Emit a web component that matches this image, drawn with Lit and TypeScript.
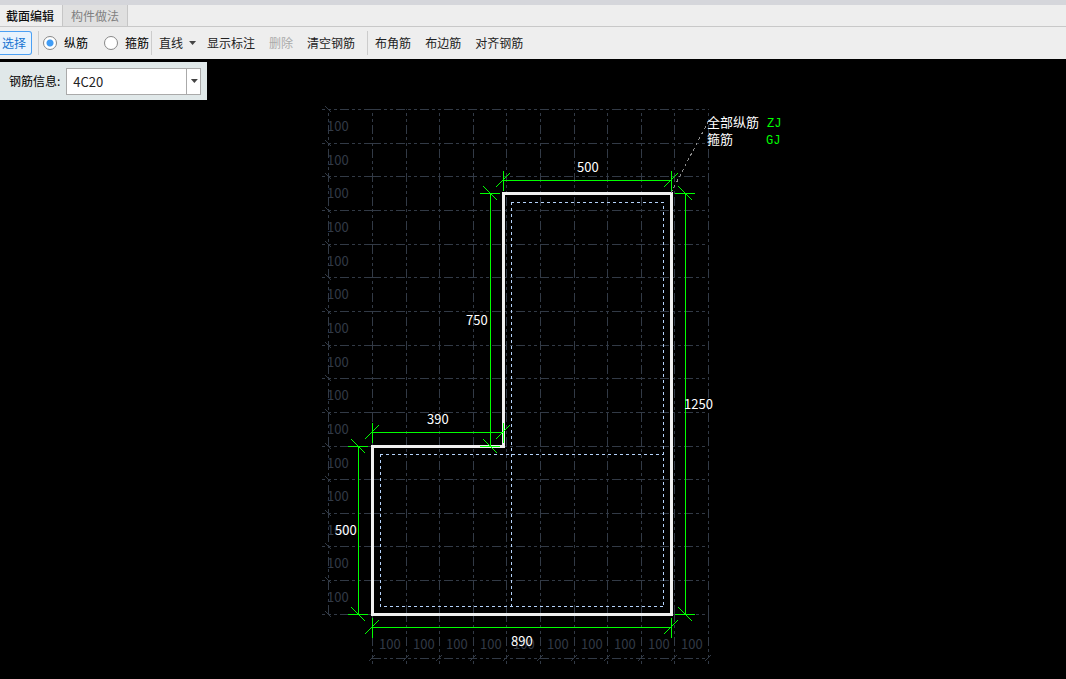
import { LitElement, html, svg, css } from "lit";
import { customElement, state } from "lit/decorators.js";

const COLS = 10;
const ROWS = 15;
const colX = (i: number) => Math.round(i * 33.6);
const rowY = (i: number) => Math.round(i * 33.65);
const W = colX(COLS);
const H = rowY(ROWS);
const range = (n: number) => Array.from({ length: n }, (_, i) => i);

type Dim = { dir: "h" | "v"; pos: number; from: number; to: number; label: string; tx: number; ty: number };

/* Coordinates are relative to the top left corner of the grid. */
const DIMS: Dim[] = [
  { dir: "h", pos: 71, from: 131, to: 299, label: "500", tx: 205, ty: 63 },
  { dir: "v", pos: 118, from: 84, to: 337, label: "750", tx: 94, ty: 216 },
  { dir: "v", pos: 313, from: 84, to: 505, label: "1250", tx: 312, ty: 300 },
  { dir: "h", pos: 323, from: 0, to: 131, label: "390", tx: 55, ty: 315 },
  { dir: "v", pos: -14, from: 337, to: 505, label: "500", tx: -37, ty: 426 },
  { dir: "h", pos: 518, from: 0, to: 299, label: "890", tx: 139, ty: 537 },
];

@customElement("section-canvas")
export class SectionCanvas extends LitElement {
  static styles = css`
    :host { display: flex; min-height: 0; background: #000; }
    .canvas { flex: 1; display: block; width: 100%; height: 100%; min-height: 570px; }
    .lines { shape-rendering: crispEdges; fill: none; stroke-width: 1; }
    .grid { stroke: #323a46; stroke-dasharray: 9 3 3 3 3 3; }
    .lead { stroke-dashoffset: 6; }
    .tick { stroke: #323a46; }
    .outline { stroke: #f0f0f0; stroke-width: 3; }
    .cover { stroke: #b4d2fa; stroke-dasharray: 3 3; }
    .dim { stroke: #00ff00; }
    .leader { stroke: #8c8c8c; stroke-dasharray: 3 3; }
    text { font: 13px "Noto Sans CJK SC", sans-serif; fill: #fff; }
    .scale { fill: #323a46; }
    .code { font: 12px "Liberation Mono", monospace; fill: #00ff00; }
  `;

  private dim(d: Dim) {
    return [d.from, d.to].map((p) =>
      d.dir === "h"
        ? svg`<path d="M${p} ${d.pos - 9}V${d.pos + 11}M${p - 7} ${d.pos + 7}L${p + 7} ${d.pos - 7}" />`
        : svg`<path d="M${d.pos - 10} ${p}H${d.pos + 10}M${d.pos - 7} ${p - 7}L${d.pos + 7} ${p + 7}" />`
    );
  }

  render() {
    return html`<svg class="canvas" role="img" aria-label="截面编辑">
      <g transform="translate(372 9)">
        <g class="lines">
          ${range(ROWS + 1).map((i) => svg`
            <path class="grid lead" d="M-50 ${rowY(i)}H0" />
            <path class="grid" d="M0 ${rowY(i)}H${W}" />
            <path class="tick" d="M-47 ${rowY(i) - 3}l6 6" />`)}
          ${range(COLS + 1).map((i) => svg`
            <path class="grid lead" d="M${colX(i)} ${H + 50}V${H}" />
            <path class="grid" d="M${colX(i)} ${H}V0" />
            <path class="tick" d="M${colX(i) - 3} ${H + 47}l6 -6" />`)}
          <path class="grid" d="M-44 ${H}V0" />
          <path class="grid" d="M0 ${H + 44}H${W}" />
        </g>
        ${range(ROWS).map((i) => svg`<text class="scale" x="-45" y=${rowY(i) + 22}>100</text>`)}
        ${range(COLS).map((i) => svg`<text class="scale" x=${colX(i) + 7} y=${H + 35}>100</text>`)}
        <g class="lines">
          <path class="cover" d="M139 93H291V497M139 93V497M8 345H291M8 345V497H291" />
          <path class="outline" d="M131 84H299V505H0V337H131Z" />
          <path class="leader" d="M299 84L336 13" />
          <g class="dim">
            ${DIMS.map((d) => svg`${this.dim(d)}
              <path d=${d.dir === "h" ? `M${d.from} ${d.pos}H${d.to}` : `M${d.pos} ${d.from}V${d.to}`} />`)}
          </g>
        </g>
        ${DIMS.map((d) => svg`<text x=${d.tx} y=${d.ty}>${d.label}</text>`)}
        <text x="335" y="18">全部纵筋</text>
        <text x="335" y="35">箍筋</text>
        <text class="code" x="395" y="18">ZJ</text>
        <text class="code" x="394" y="35">GJ</text>
      </g>
    </svg>`;
  }
}

@customElement("app-root")
export class AppRoot extends LitElement {
  static styles = css`
    :host {
      display: flex; flex-direction: column; min-height: 100vh; background: #000; color: #222;
      font: 12px/16px "Noto Sans CJK SC", sans-serif;
    }
    button, select { font: inherit; color: inherit; margin: 0; }
    .tabs { display: flex; background: #eee; border-top: 5px solid #d5d6db; border-bottom: 1px solid #c8c8c8; height: 21px; }
    .tab { border: 0; border-right: 1px solid #c6c6c6; padding: 0 8px; background: #e0e0e0; color: #808080; }
    .tab.active { background: #eee; color: #111; font-weight: 500; padding: 0 8px 0 6px; }
    .toolbar { display: flex; align-items: center; height: 32px; background: #eee; white-space: nowrap; }
    .tool { border: 0; background: none; padding: 0 7px; height: 24px; }
    .tool:disabled { color: #aaa; }
    .tool.select {
      background: #e8f3fd; color: #1673d1; border: 1px solid #4ba0f4; border-left: 0;
      border-radius: 0 3px 3px 0; padding: 0 5px 0 2px;
    }
    .sep { width: 1px; height: 24px; background: #ccc; }
    .select + .sep { margin-left: 6px; }
    .gap { margin-left: 5px; }
    .radio { display: flex; align-items: center; gap: 7px; color: #000; margin-left: 4px; }
    .radio + .radio { margin: 0 2px 0 16px; }
    .radio input {
      appearance: none; box-sizing: border-box; width: 14px; height: 14px; margin: 0;
      border: 1px solid #888; border-radius: 50%; background: #fff;
    }
    .radio input:checked { background: radial-gradient(circle, #409cf5 3px, #fff 4px); }
    .tool.menu { display: flex; align-items: center; gap: 6px; padding-right: 4px; }
    .caret { width: 7px; height: 4px; background: #444; clip-path: polygon(0 0, 100% 0, 50% 100%); }
    .panel {
      display: flex; align-items: center; align-self: flex-start; box-sizing: border-box; height: 38px;
      margin-top: 3px; padding: 0 6px 0 9px; gap: 6px; background: #e0e8e9; color: #000;
    }
    .combo { display: grid; grid-template-columns: 120px 15px; box-sizing: border-box; height: 27px; align-items: center; }
    .combo select {
      grid-area: 1 / 1 / 2 / 3; appearance: none; box-sizing: border-box; width: 100%; height: 27px;
      border: 1px solid #aaa; border-radius: 0; background: #fff; padding: 2px 20px 0 6px; font-size: 13px; color: #222;
    }
    .drop {
      grid-area: 1 / 2; display: flex; align-items: center; justify-content: center; pointer-events: none;
      height: 25px; border-left: 1px solid #aaa; z-index: 1;
    }
    section-canvas { flex: 1; }
  `;

  @state() private bar = "long";

  render() {
    return html`
      <nav class="tabs" role="tablist">
        <button class="tab active" role="tab" aria-selected="true">截面编辑</button>
        <button class="tab" role="tab" aria-selected="false">构件做法</button>
      </nav>
      <div class="toolbar" role="toolbar">
        <button class="tool select">选择</button>
        <span class="sep"></span>
        <label class="radio"><input type="radio" name="bar" .checked=${this.bar === "long"} @change=${() => (this.bar = "long")} />纵筋</label>
        <label class="radio"><input type="radio" name="bar" .checked=${this.bar === "hoop"} @change=${() => (this.bar = "hoop")} />箍筋</label>
        <span class="sep"></span>
        <button class="tool menu">直线<span class="caret"></span></button>
        <button class="tool">显示标注</button>
        <button class="tool" disabled>删除</button>
        <button class="tool">清空钢筋</button>
        <span class="sep gap"></span>
        <button class="tool">布角筋</button>
        <button class="tool">布边筋</button>
        <button class="tool">对齐钢筋</button>
      </div>
      <div class="panel">
        <label for="info">钢筋信息:</label>
        <div class="combo">
          <select id="info"><option>4C20</option></select>
          <span class="drop"><span class="caret"></span></span>
        </div>
      </div>
      <section-canvas></section-canvas>
    `;
  }
}
